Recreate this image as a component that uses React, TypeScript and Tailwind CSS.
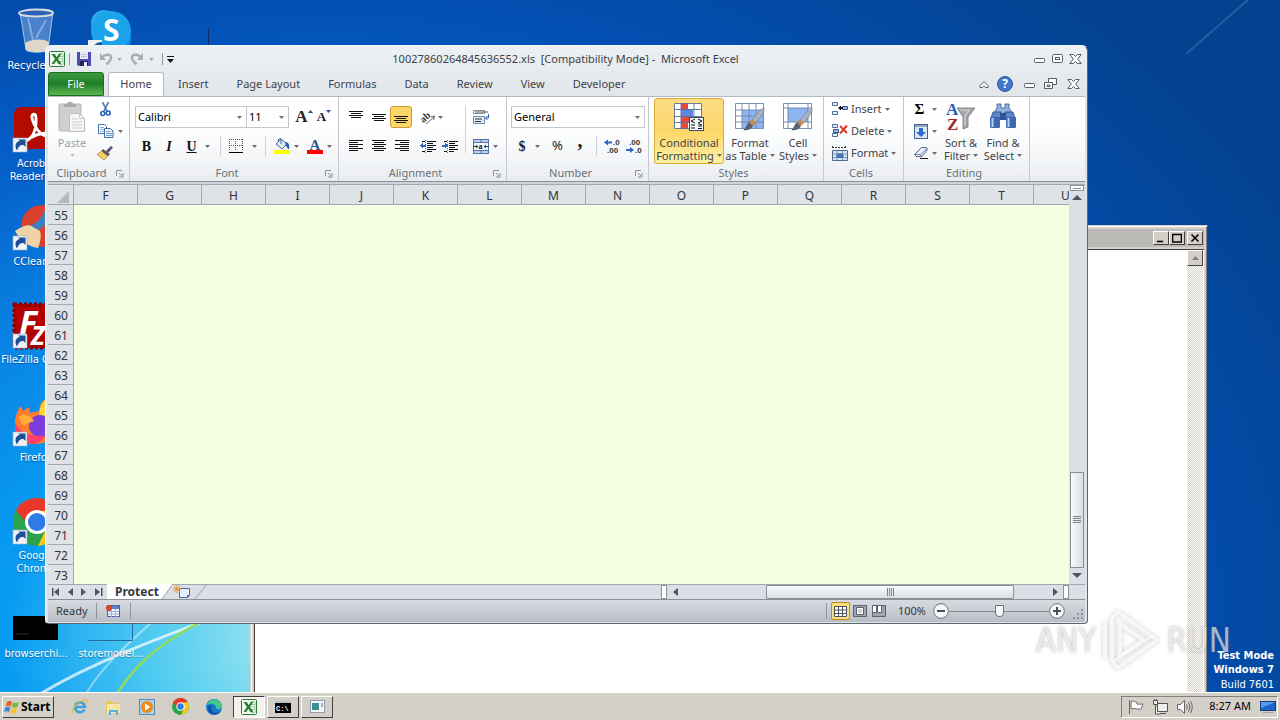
// Windows 7 desktop with an Excel 2010 window in front of a classic window
import type { ReactNode } from "react";

const COLUMNS = ["F", "G", "H", "I", "J", "K", "L", "M", "N", "O", "P", "Q", "R", "S", "T", "U"];
const ROWS = Array.from({ length: 19 }, (_, i) => 55 + i);
const TABS = ["Insert", "Page Layout", "Formulas", "Data", "Review", "View", "Developer"];

/* ---------- small shared pieces ---------- */

function Caret({ className = "text-[#6b6f75]" }: { className?: string }) {
  return (
    <svg width="5" height="3" viewBox="0 0 5 3" className={`shrink-0 ${className}`}>
      <path d="M0 0h5L2.5 3z" fill="currentColor" />
    </svg>
  );
}

function Sep({ className = "h-5", dark }: { className?: string; dark?: boolean }) {
  return <span className={`w-px shrink-0 ${dark ? "bg-[#8f959e]" : "bg-[#cfd3d9]"} ${className}`} />;
}

function Tool({ label, className, children }: { label: string; className: string; children: ReactNode }) {
  return (
    <button aria-label={label} className={`flex h-[22px] shrink-0 items-center justify-center gap-1 ${className}`}>
      {children}
    </button>
  );
}

function Group({
  label,
  className,
  launcher,
  children,
}: {
  label: string;
  className: string;
  launcher?: boolean;
  children: ReactNode;
}) {
  return (
    <section className={`flex shrink-0 flex-col border-r border-[#c3c8cf] ${className}`}>
      <div className="flex h-[68px]">{children}</div>
      <div className="flex h-4 items-center pr-[5px] text-[#6a7078]">
        <span className="flex-1 text-center">{label}</span>
        {launcher && (
          <button aria-label={`${label} settings`}>
            <svg width="9" height="9" viewBox="0 0 9 9" fill="none" stroke="#8b9097">
              <path d="M1.500 7V1.500H7M4 4l3 3M8 4v4H4" />
            </svg>
          </button>
        )}
      </div>
    </section>
  );
}

function Combo({ label, value, className }: { label: string; value: string; className: string }) {
  return (
    <div className={`flex h-[22px] items-center border border-[#c3c7cd] bg-white pr-1 ${className}`}>
      <select aria-label={label} className="min-w-0 flex-1 appearance-none bg-transparent pl-[2px] text-black outline-none">
        <option>{value}</option>
      </select>
      <Caret />
    </div>
  );
}

/* ---------- icons ---------- */

function ExcelIcon() {
  return (
    <svg width="16" height="16" viewBox="0 0 16 16">
      <rect x=".5" y=".5" width="15" height="15" rx="1" fill="#f4faf2" stroke="#2b7a33" />
      <path d="M10 2.500h4v11h-4" fill="#fff" stroke="#9cc79b" />
      <path d="M10 5.500h4M10 8h4M10 10.500h4" stroke="#9cc79b" />
      <path d="M2.500 3h3.200l2 3.300L9.600 3h2.800L9 8l3.600 5H9.400L7.300 9.800 5.300 13H2.500L6 8z" fill="#23802d" />
    </svg>
  );
}

function SaveIcon() {
  return (
    <svg width="14" height="14" viewBox="0 0 14 14">
      <path d="M0 0h14v14H1.500L0 12.500z" fill="#4f4db5" />
      <rect x="3" y="0" width="8" height="7" fill="#e8ecfa" />
      <path d="M4 2.500h6M4 4.500h6" stroke="#b9c0e0" />
      <rect x="3" y="9" width="8" height="5" fill="#27235e" />
      <rect x="7" y="10" width="3" height="4" fill="#e8ecfa" />
    </svg>
  );
}

function UndoIcon({ flip }: { flip?: boolean }) {
  return (
    <svg width="14" height="14" viewBox="0 0 14 14" className={flip ? "-scale-x-100" : ""}>
      <path d="M3 5.500c2-3 8-4 9-.5 1 3-2 4.500-4.500 7.500" fill="none" stroke="#a9adb3" strokeWidth="2.400" />
      <path d="M1 1v7h6z" fill="#a9adb3" />
    </svg>
  );
}

function PasteIcon() {
  return (
    <svg width="28" height="32" viewBox="0 0 28 32">
      <rect x="1" y="3" width="22" height="27" rx="1" fill="#cfcfcf" stroke="#b5b5b5" />
      <path d="M6 6V3h3c0-3 6-3 6 0h3v3z" fill="#aaa" />
      <path d="M11.500 12.500h10l5 5v13h-15z" fill="#f6f6f6" stroke="#bdbdbd" />
      <path d="M21.500 12.500v5h5M14 18h6M14 21h10M14 24h10M14 27h10" fill="none" stroke="#ccc" />
    </svg>
  );
}

function CutIcon() {
  return (
    <svg width="11" height="15" viewBox="0 0 11 15" fill="none">
      <path d="M2.500 0l4.500 9M8.500 0L4 9" stroke="#5e7fae" strokeWidth="1.700" />
      <circle cx="2.800" cy="11.500" r="2" stroke="#2b5fb3" strokeWidth="1.600" />
      <circle cx="8.200" cy="11" r="2" stroke="#2b5fb3" strokeWidth="1.600" />
    </svg>
  );
}

function CopyIcon() {
  return (
    <svg width="16" height="14" viewBox="0 0 16 14" stroke="#3f6fae">
      <path d="M.5.5h6l2 2v7h-8z" fill="#fff" />
      <path d="M2 3.500h4M2 5.500h5M2 7.500h5" stroke="#8aaede" />
      <path d="M6.500 4.500h6l2.500 2.500v6.500H6.500z" fill="#e9f1fc" />
      <path d="M8 7.500h4M8 9.500h6M8 11.500h6" stroke="#6f9bd8" />
    </svg>
  );
}

function PainterIcon() {
  return (
    <svg width="16" height="14" viewBox="0 0 16 14">
      <path d="M14 0l2 1.500L11 7 9 5z" fill="#5b4b7a" />
      <path d="M6 3l7 5-2 2.500-7-5z" fill="#5a5550" />
      <path d="M4.500 5l6 5L7 14 0 8.500z" fill="#efcf6a" stroke="#b18d33" strokeWidth=".8" />
    </svg>
  );
}

function BorderIcon() {
  return (
    <svg width="14" height="14" viewBox="0 0 14 14" fill="none" stroke="#555">
      <path d="M.5 0v12M6.500 0v12M13.500 0v12M0 .5h14M0 6.500h14" strokeDasharray="1 1" />
      <path d="M0 13.500h14" stroke="#000" />
    </svg>
  );
}

function BucketIcon() {
  return (
    <svg width="16" height="16" viewBox="0 0 16 16">
      <path d="M7 1l6 5-5 5-6-5z" fill="#dbe7f6" stroke="#46648f" />
      <path d="M7 6V1.500C7 0 4.500 0 4.500 2v2" fill="none" stroke="#46648f" />
      <path d="M11.500 4c3 0 4.500 3 3.500 7.500-2-1-2-3-3.500-4z" fill="#2c5fb0" />
      <rect y="12" width="16" height="4" fill="#ffff00" />
    </svg>
  );
}

function Lines({ widths, y = 0, align = "start" }: { widths: number[]; y?: number; align?: "start" | "center" | "end" }) {
  return (
    <svg width="14" height="14" viewBox="0 0 14 14" fill="#111" shapeRendering="crispEdges">
      {widths.map((w, i) => {
        const x = align === "start" ? 0 : align === "end" ? 14 - w : Math.floor((14 - w) / 2);
        return <rect key={i} x={x} y={y + i * 2 + 1} width={w} height="1" />;
      })}
    </svg>
  );
}

function IndentIcon({ right }: { right?: boolean }) {
  return (
    <svg width="16" height="13" viewBox="0 0 16 13" shapeRendering="crispEdges">
      <path d="M2 1.500h3M7 1.500h9M7 3.500h6M7 5.500h9M7 7.500h6M7 9.500h9M2 11.500h3M7 11.500h5" stroke="#111" />
      <path d="M5.500 0v13" stroke="#666" strokeDasharray="1 1" />
      <path d={right ? "M6 5.500L3 3v2H0v2h3v2z" : "M0 5.500L3 3v2h3v2H3v2z"} fill="#2c62c0" />
    </svg>
  );
}

function OrientIcon() {
  return (
    <svg width="16" height="15" viewBox="0 0 16 15">
      <text x="1" y="11" fontSize="10" fontWeight="bold" fontFamily="Liberation Serif, serif" fill="#333" transform="rotate(-42 5 9)">
        ab
      </text>
      <path d="M6 14l8-7M14.500 6l-4 .8M14.500 6l-.8 4" stroke="#667" fill="none" />
    </svg>
  );
}

function WrapIcon() {
  return (
    <svg width="17" height="16" viewBox="0 0 17 16" fill="none">
      <path d="M.5 1.500h11v3H.5z" fill="#fff" stroke="#8a8f96" />
      <path d="M2 3h13" stroke="#555" />
      <path d="M.5 7.500h11v7H.5z" fill="#e3edfa" stroke="#6d86aa" />
      <path d="M2 10h7M2 12.500h6" stroke="#333" />
      <path d="M15.500 5v4h-3M14.500 7l-2 2 2 2" stroke="#2c62c0" />
    </svg>
  );
}

function MergeIcon() {
  return (
    <svg width="16" height="15" viewBox="0 0 16 15">
      <rect x=".5" y=".5" width="15" height="14" fill="#b9d0ee" stroke="#54749f" />
      <path d="M0 3.500h16M0 11.500h16M8 0v3M8 12v3" stroke="#54749f" />
      <rect x="1" y="4" width="14" height="7" fill="#f4f8fd" />
      <path d="M0 7.500h5M11 7.500h5" stroke="#1f3f73" />
      <path d="M5 7.500L3 5.500v4zM11 7.500l2-2v4z" fill="#1f3f73" />
      <text x="5.500" y="10" fontSize="8" fontWeight="bold" fontFamily="Liberation Serif, serif" fill="#111">a</text>
    </svg>
  );
}

function DecimalIcon({ less }: { less?: boolean }) {
  return (
    <svg width="17" height="15" viewBox="0 0 17 15" fontSize="8" fontWeight="bold" fontFamily="Liberation Sans, sans-serif">
      <text x={less ? 3 : 9} y="6" fill="#333">{less ? ".00" : ".0"}</text>
      <text x={less ? 9 : 3} y="14" fill="#333">{less ? ".0" : ".00"}</text>
      <path d={less ? "M0 10h4V8l4 3-4 3v-2H0z" : "M8 2.500H4V.5L0 3.500l4 3v-2h4z"} fill="#2c62c0" />
    </svg>
  );
}

function Brush() {
  return (
    <g>
      <path d="M30 6c1 4-5 12-9 15l-3-3C22 13 27 7 30 6z" fill="#a8b1bf" stroke="#6e7a8c" strokeWidth=".6" />
      <path d="M18 17l4 4-3 3-4-4z" fill="#c68b4a" />
      <path d="M15 20l4 4c-2 4-6 5-10 4 3-1 3-6 6-8z" fill="#5d6470" />
    </g>
  );
}

function CondFormatIcon() {
  return (
    <svg width="32" height="30" viewBox="0 0 32 30">
      <rect x="1.500" y="1.500" width="27" height="25" fill="#fff" />
      <path d="M8 1h7v6H8zM8 14h10v6H8zM8 20h7v7H8z" fill="#e8483a" />
      <path d="M8 7h12v7H8z" fill="#5d86e0" />
      <path d="M1.500 1.500h27v25h-27zM1 7.500h27M1 14.500h27M1 20.500h27M8 1v26M21 1v26" fill="none" stroke="#5b6f99" strokeWidth=".9" />
      <rect x="16.500" y="15.500" width="14" height="13" fill="#f4f7fb" stroke="#3d4a5f" />
      <path d="M22 17l-4 2 4 2M18 23h4M18 26h4M25 17l4 2-4 2M25 21.500l4 1.500M25 24h4M25 26.500h4" fill="none" stroke="#111" />
    </svg>
  );
}

function TableIcon() {
  return (
    <svg width="32" height="30" viewBox="0 0 32 30">
      <rect x="1.500" y="1.500" width="28" height="25" fill="#fff" />
      <path d="M8 8h22v18H8z" fill="#8fb4f2" />
      <path d="M1.500 1.500h28v25h-28zM1 8h28M1 14h28M1 20h28M8 1v26M15 1v26M22 1v26" fill="none" stroke="#6f83ad" strokeWidth=".9" />
      <Brush />
    </svg>
  );
}

function CellStyleIcon() {
  return (
    <svg width="32" height="30" viewBox="0 0 32 30">
      <rect x="1.500" y="1.500" width="28" height="25" fill="#fff" />
      <path d="M6 6h20v14H6z" fill="#8fb4f2" />
      <path d="M1.500 1.500h28v25h-28zM1 6h28M1 20h28M6 1v26M26 1v26" fill="none" stroke="#6f83ad" strokeWidth=".9" />
      <Brush />
    </svg>
  );
}

function CellsIcon({ kind }: { kind: "insert" | "delete" | "format" }) {
  if (kind === "format") {
    return (
      <svg width="16" height="15" viewBox="0 0 16 15" fill="none" stroke="#4f6c96">
        <path d="M0 1.500h14M.5 0v3M13.500 0v3" stroke="#333" strokeDasharray="2 1" />
        <path d="M.5 4.500h15v10H.5z" fill="#d4e2f5" />
        <path d="M0 8h16M0 11.500h16M5 4v11M10.500 4v11" strokeOpacity=".6" />
        <path d="M5 8h6v3.500H5z" fill="#4679c9" />
      </svg>
    );
  }
  return (
    <svg width="16" height="14" viewBox="0 0 16 14" fill="none">
      <path d="M.5.5h5v3h-5zM.5 9.500h5v3h-5z" fill="#e7effa" stroke="#4f6c96" />
      {kind === "insert" ? (
        <>
          <path d="M10.500 4.500h5v3h-5z" fill="#9ab8e6" stroke="#35558a" />
          <path d="M6 6l3-2.500V5h2v2H9v1.500z" fill="#111" />
        </>
      ) : (
        <>
          <path d="M1.500 5.500h5v3h-5z" fill="#9ab8e6" stroke="#35558a" />
          <path d="M8 2l7 7M15 1.500L8 9.500" stroke="#d93a2b" strokeWidth="2" />
        </>
      )}
    </svg>
  );
}

function SortIcon() {
  return (
    <svg width="32" height="30" viewBox="0 0 32 30" fontFamily="Liberation Serif, serif" fontWeight="bold">
      <path d="M12 6h18l-7 9v10l-5 2V15z" fill="#a3a6aa" stroke="#75787c" strokeWidth=".8" />
      <path d="M15 8h9l-4 6v9" fill="none" stroke="#c9cbcd" strokeWidth="1.500" />
      <text x="1" y="13" fontSize="17" fill="#2b5bb5">A</text>
      <text x="2" y="28" fontSize="17" fill="#a32626">Z</text>
    </svg>
  );
}

function FindIcon() {
  return (
    <svg width="28" height="28" viewBox="0 0 28 28">
      <path d="M8 2h4v4h4V2h4v4l2 3v4H6V9l2-3z" fill="#93b2e0" stroke="#35568f" strokeWidth=".8" />
      <path d="M4 10h8l1 6H2zM16 10h8l2 6H15z" fill="#5b86c9" stroke="#2d4b82" strokeWidth=".8" />
      <rect x="1" y="15" width="10" height="11" rx="1" fill="#3d69b3" />
      <rect x="17" y="15" width="10" height="11" rx="1" fill="#3d69b3" />
      <path d="M3.500 16v9M19.500 16v9" stroke="#b7cff0" strokeWidth="2" />
      <rect x="11" y="11" width="6" height="7" fill="#2f5596" />
    </svg>
  );
}

function FillDownIcon() {
  return (
    <svg width="14" height="15" viewBox="0 0 14 15">
      <rect x=".5" y=".5" width="13" height="14" fill="#dce8f8" stroke="#44618f" />
      <path d="M1 2h12" stroke="#44618f" />
      <path d="M5 4h4v4h3l-5 5-5-5h3z" fill="#2f6ad0" />
    </svg>
  );
}

function EraserIcon() {
  return (
    <svg width="14" height="12" viewBox="0 0 14 12">
      <path d="M7.500.5h5l1 2-5.500 7H2L.5 7.500z" fill="#e6edf8" stroke="#53698f" />
      <path d="M.5 7.500h6L13 1.500M6.500 7.500l1 2" fill="none" stroke="#53698f" strokeWidth=".8" />
      <path d="M6 11.500h8" stroke="#111" />
    </svg>
  );
}

type Glyph = "min" | "max" | "restore" | "close";

function WindowGlyph({ kind }: { kind: Glyph }) {
  return (
    <svg width="13" height="12" viewBox="0 0 13 12" fill="#fff" stroke="#565c66">
      {kind === "min" && <rect x="1.500" y="5.500" width="10" height="4" rx="1" />}
      {kind === "max" && (
        <>
          <rect x="1.500" y="1.500" width="10" height="8" rx="1" />
          <rect x="4.500" y="4.500" width="4" height="2" />
        </>
      )}
      {kind === "restore" && (
        <>
          <path d="M4.500.5h8v6h-8z" />
          <path d="M.5 4.500h8v6h-8z" />
          <path d="M3 7h3v1.500H3z" />
        </>
      )}
      {kind === "close" && <path d="M.8 1.500h3.700l2 2 2-2h3.700L8.700 6l3.500 4.500H8.500l-2-2-2 2H.8L4.300 6z" />}
    </svg>
  );
}

function Arrow({ dir, bar }: { dir: "left" | "right" | "up" | "down"; bar?: boolean }) {
  const d = { left: "M7 1v8L2 5z", right: "M2 1v8l5-4z", up: "M0 7h10L5 2z", down: "M0 2h10L5 7z" }[dir];
  return (
    <svg width="10" height="10" viewBox="0 0 10 10" fill="#4b5563">
      <path d={d} />
      {bar && <path d={dir === "left" ? "M0 1h1.500v8H0z" : "M8 1h1.500v8H8z"} />}
    </svg>
  );
}

/* ---------- desktop icons ---------- */

function Shortcut() {
  return (
    <g>
      <rect x="1" y="32" width="14" height="14" fill="#eef2f7" stroke="#9db0c6" strokeWidth=".6" />
      <path d="M5 44.500c-3-5-1-9 3-9.500L6 33.500h7.500V41l-2-2c-4 0-5 2-6.500 5.500z" fill="#1c4f93" />
    </g>
  );
}

function RecycleArt() {
  return (
    <g>
      <path d="M8 4l6 38c4 3 18 3 22 0l5-38z" fill="#8fb6e6" fillOpacity=".5" stroke="#d7e6f6" strokeOpacity=".7" />
      <path d="M13 35c6-4 18-5 24-1l-1 8c-4 3-18 3-22 0z" fill="#ded6c8" />
      <path d="M16 10l5 22M34 12l-10 18" fill="none" stroke="#dceafa" strokeOpacity=".4" strokeWidth="2" />
      <ellipse cx="24" cy="5" rx="17" ry="3.500" fill="#2c62b5" stroke="#d9dde2" strokeWidth="1.800" />
    </g>
  );
}

function SkypeArt() {
  return (
    <g>
      <circle cx="17" cy="15" r="13" fill="#2ba9e8" />
      <circle cx="30" cy="31" r="14" fill="#0f8de0" />
      <circle cx="24" cy="23" r="20" fill="#1ba4ea" />
      <text x="16" y="33" fontSize="30" fontWeight="bold" fontFamily="Open Sans, sans-serif" fill="#fff">S</text>
      <rect x="1" y="32" width="14" height="14" fill="#eef2f7" />
      <path d="M5 41c1-5 4-5 5-5l-1-1 6-1v6l-2-2c-4 0-5 2-5 4z" fill="#1c4f93" />
    </g>
  );
}

function AcrobatArt() {
  return (
    <g>
      <rect x="2" y="1" width="45" height="42" rx="7" fill="#b30b00" />
      <path d="M14 35c6-2 11-11 10-23 0-5-5-5-4 0 2 9 8 17 16 19 6 1 6-4 0-4-8 0-16 3-22 8-4 3-4 2 0 0z" fill="none" stroke="#fff" strokeWidth="2.800" />
      <Shortcut />
    </g>
  );
}

function CCleanerArt() {
  return (
    <g>
      <circle cx="30" cy="22" r="21" fill="#d9402d" />
      <path d="M35 2l4 1-6 18-8 6-8-5c6-2 12-5 18-20z" fill="#3a81c4" />
      <path d="M3 27c6-4 12-7 16-5l9 5c2 6-1 15-2 17-8-1-17-6-23-17z" fill="#f0d3a4" />
      <Shortcut />
    </g>
  );
}

function FileZillaArt() {
  return (
    <g>
      <rect x="2" y="2" width="45" height="44" fill="#b20000" stroke="#8a0000" strokeWidth="3" strokeDasharray="3 2" />
      <text x="7" y="33" fontSize="34" fontWeight="bold" fontStyle="italic" fontFamily="Open Sans, sans-serif" fill="#fff">F</text>
      <text x="19" y="43" fontSize="26" fontWeight="bold" fontStyle="italic" fontFamily="Open Sans, sans-serif" fill="#fff">Z</text>
      <Shortcut />
    </g>
  );
}

function FirefoxArt() {
  return (
    <g>
      <path d="M22 44C6 44-1 28 5 13c0 0 1-4 4-7l2 5 6-4 1 6c4-1 6-2 9-2 0-5 2-9 6-12 3 6 13 14 13 26 0 12-10 19-24 19z" fill="#ff7a2f" />
      <path d="M33 0c3 6 13 14 13 26l-18-8c-2-7 1-14 5-18z" fill="#ffd83d" />
      <circle cx="28" cy="26" r="11" fill="#7b3fe0" />
      <path d="M3 22c6 14 18 14 30 14-4 7-11 9-18 7C8 40 2 32 3 22z" fill="#ff3f6a" />
      <path d="M7 16c7-3 12 0 15 5-4 2-7 1-9 5-4-2-6-6-6-10z" fill="#ffac38" />
      <Shortcut />
    </g>
  );
}

function ChromeArt() {
  return (
    <g>
      <circle cx="25" cy="24" r="24" fill="#2aa34c" />
      <path d="M4 12C13-4 37-4 46 12l-21 3-8 13z" fill="#e8382c" />
      <path d="M46 12c7 16-3 35-20 36l9-19-6-16z" fill="#fbc816" />
      <circle cx="25" cy="24" r="12" fill="#fff" />
      <circle cx="25" cy="24" r="9" fill="#2f7be6" />
      <Shortcut />
    </g>
  );
}

function DesktopIcon({ label, className = "col-start-1", children }: { label?: string; className?: string; children: ReactNode }) {
  return (
    <button className={`flex flex-col items-center gap-[3px] pt-2 ${className}`}>
      <svg width="48" height="48" viewBox="0 0 48 48" className="shrink-0">
        {children}
      </svg>
      {label && <span className="w-[72px] text-center leading-[13px] text-white [text-shadow:0_1px_1px_#0036]">{label}</span>}
    </button>
  );
}

function Wallpaper() {
  return (
    <div className="absolute inset-0 bg-[radial-gradient(ellipse_1000px_780px_at_320px_640px,#b5eef0_0%,#55cdf0_16%,#089cf2_31%,#0886e6_48%,#0664cf_65%,#034fb2_82%,#03428f_112%)]">
      <svg className="h-full w-full" fill="none">
        <path d="M40 694C90 664 140 645 260 600" stroke="#fff" strokeOpacity=".7" strokeWidth="3" />
        <path d="M86 694C100 670 120 650 160 615" stroke="#fff" strokeOpacity=".45" strokeWidth="2" />
        <path d="M117 694C135 664 160 644 200 622" stroke="#8fdc5a" strokeWidth="2.500" />
        <path d="M1250 -2L1186 54" stroke="#5f93cf" strokeOpacity=".35" strokeWidth="2" />
        <path d="M208.500 28v18" stroke="#0a2f6c" />
      </svg>
    </div>
  );
}

/* ---------- classic window in the back ---------- */

function ClassicButton({ label, d }: { label: string; d: string }) {
  return (
    <button
      aria-label={label}
      className="flex h-[14px] w-4 items-center justify-center border border-t-white border-r-[#404040] border-b-[#404040] border-l-white bg-[#d4d0c8]"
    >
      <svg width="10" height="10" viewBox="0 0 10 10" fill="none" stroke="#000" strokeWidth="1.600">
        <path d={d} />
      </svg>
    </button>
  );
}

function ClassicWindow() {
  return (
    <div className="absolute top-[225px] right-[72px] bottom-[-12px] left-[250px] flex flex-col border border-t-[#d4d0c8] border-r-[#404040] border-l-[#d4d0c8] bg-[#d4d0c8] p-[3px] shadow-[inset_1px_1px_#fff,inset_-1px_-1px_#808080]">
      <div className="flex h-[18px] shrink-0 items-center justify-end bg-[#bcbab7] pr-px">
        <ClassicButton label="Minimize" d="M1 8.500h6" />
        <ClassicButton label="Maximize" d="M.5 1.500h9v7.500h-9z" />
        <span className="w-[2px]" />
        <ClassicButton label="Close" d="M1.500 1.500l7 7M8.500 1.500l-7 7" />
      </div>
      <div className="mt-[2px] flex flex-1 border-t border-l border-[#404040] bg-white pr-px">
        <div className="flex-1" />
        <div className="w-4 bg-[#ebe9e5] bg-[repeating-conic-gradient(#fff_0_25%,#d4d0c8_0_50%)] bg-[size:2px_2px]">
          <button
            aria-label="Scroll up"
            className="flex h-4 w-4 items-center justify-center border border-t-white border-r-[#404040] border-b-[#404040] border-l-white bg-[#d4d0c8]"
          >
            <svg width="7" height="4" viewBox="0 0 7 4">
              <path d="M0 4h7L3.500 0z" fill="#808080" />
            </svg>
          </button>
        </div>
      </div>
    </div>
  );
}

/* ---------- Excel ---------- */

function TitleBar() {
  return (
    <header className="flex h-[26px] shrink-0 items-center">
      <div className="flex flex-1 items-center pl-px">
        <ExcelIcon />
        <Sep dark className="ml-1 h-3" />
        <button aria-label="Save" className="ml-[7px]"><SaveIcon /></button>
        <button aria-label="Undo" className="ml-2 flex items-center gap-1"><UndoIcon /><Caret className="text-[#a5a9af]" /></button>
        <button aria-label="Redo" className="ml-2 flex items-center gap-[5px]"><UndoIcon flip /><Caret className="text-[#a5a9af]" /></button>
        <Sep dark className="ml-2 h-3" />
        <button aria-label="Customize Quick Access Toolbar" className="ml-1">
          <svg width="7" height="7" viewBox="0 0 7 7"><path d="M0 0h7v1H0zM0 3h7L3.500 7z" fill="#111" /></svg>
        </button>
      </div>
      <h1 className="whitespace-pre text-[#3c4046]">10027860264845636552.xls  [Compatibility Mode] -  Microsoft Excel</h1>
      <div className="flex flex-1 justify-end gap-[5px] pr-[3px]">
        <button aria-label="Minimize"><WindowGlyph kind="min" /></button>
        <button aria-label="Maximize"><WindowGlyph kind="max" /></button>
        <button aria-label="Close"><WindowGlyph kind="close" /></button>
      </div>
    </header>
  );
}

function TabRow() {
  return (
    <nav className="flex h-6 shrink-0 items-stretch text-[#3f444b]">
      <button className="w-14 rounded-t-[3px] border border-[#1c6b22] bg-[linear-gradient(#3e9a3f,#1f7a28_50%,#2c8a31_60%,#5cb54f)] text-white">File</button>
      <button className="-mb-px ml-1 w-14 rounded-t-[3px] border border-b-0 border-[#b5bac2] bg-white pb-[2px]">Home</button>
      {TABS.map((tab) => (
        <button key={tab} className="px-[14px]">{tab}</button>
      ))}
      <div className="flex flex-1 items-center justify-end gap-2 pr-[5px]">
        <button aria-label="Minimize the Ribbon">
          <svg width="10" height="9" viewBox="0 0 10 9" fill="#fff" stroke="#565c66">
            <path d="M1 5.500L5 1.500l4 4V7.500H6.500L5 6 3.500 7.500H1z" />
          </svg>
        </button>
        <button aria-label="Help" className="mr-[2px] flex h-4 w-4 items-center justify-center rounded-full border border-[#2d5a9e] bg-[#3f78cc] text-[12px] font-bold text-white">?</button>
        <button aria-label="Minimize workbook"><WindowGlyph kind="min" /></button>
        <button aria-label="Restore workbook" className="mr-[2px]"><WindowGlyph kind="restore" /></button>
        <button aria-label="Close workbook"><WindowGlyph kind="close" /></button>
      </div>
    </nav>
  );
}

function BigButton({ lines, active, className, children }: { lines: [string, string]; active?: boolean; className: string; children: ReactNode }) {
  return (
    <button
      className={`flex h-[66px] shrink-0 flex-col items-center rounded-[3px] border pt-[3px] leading-[13px] whitespace-nowrap ${
        active ? "border-[#d9ae3c] bg-[linear-gradient(#fbdd83,#fdd668_50%,#fff1a5)]" : "border-transparent"
      } ${className}`}
    >
      <span className="flex h-[34px] items-start">{children}</span>
      <span>{lines[0]}</span>
      <span className="flex items-center gap-[3px]">
        {lines[1]}
        <Caret />
      </span>
    </button>
  );
}

function Ribbon() {
  return (
    <div className="flex h-[86px] shrink-0 overflow-hidden border-t border-b border-t-[#b5bac2] border-b-[#8b9097] bg-[linear-gradient(#fff,#fff_35%,#f3f5f7_75%,#e9ecf0)] text-[#3f444b]">
      <Group label="Clipboard" className="w-[82px]" launcher>
        <button className="flex w-12 flex-col items-center pt-1 text-[#9a9ea4]">
          <PasteIcon />
          <span className="mt-[2px] leading-4">Paste</span>
          <Caret className="mt-[3px] text-[#c0c3c8]" />
        </button>
        <div className="flex flex-col pt-px">
          <Tool label="Cut" className="w-[18px]"><CutIcon /></Tool>
          <Tool label="Copy" className="w-[28px]"><CopyIcon /><Caret /></Tool>
          <Tool label="Format Painter" className="w-[18px]"><PainterIcon /></Tool>
        </div>
      </Group>

      <Group label="Font" className="w-[209px]" launcher>
        <div className="flex flex-1 flex-col gap-[7px] pt-[9px] pl-[5px]">
          <div className="flex">
            <Combo label="Font" value="Calibri" className="w-[112px]" />
            <Combo label="Font size" value="11" className="-ml-px w-[43px]" />
            <Tool label="Grow font" className="ml-[5px] w-5">
              <span className="flex items-center font-['Liberation_Serif',serif] text-[17px] font-bold text-[#222]">A<Caret className="-mt-3 rotate-180 text-[#2b4f8c]" /></span>
            </Tool>
            <Tool label="Shrink font" className="w-5">
              <span className="flex items-center font-['Liberation_Serif',serif] text-[13px] font-bold text-[#222]">A<Caret className="-mt-3 text-[#2b4f8c]" /></span>
            </Tool>
          </div>
          <div className="flex items-center">
            <Tool label="Bold" className="w-[23px] font-['Liberation_Serif',serif] text-[14px] font-bold text-[#111]">B</Tool>
            <Tool label="Italic" className="w-[22px] font-['Liberation_Serif',serif] text-[14px] font-bold text-[#111] italic">I</Tool>
            <Tool label="Underline" className="w-[36px] font-['Liberation_Serif',serif] text-[14px] font-bold text-[#111]"><u>U</u><Caret className="ml-1 text-[#6b6f75]" /></Tool>
            <Sep className="mx-1 h-5" />
            <Tool label="Borders" className="w-[36px]"><BorderIcon /><span className="w-px" /><Caret /></Tool>
            <Sep className="mx-1 h-5" />
            <Tool label="Fill colour" className="w-[32px]"><BucketIcon /><Caret /></Tool>
            <Tool label="Font colour" className="w-[34px]">
              <svg width="16" height="16" viewBox="0 0 16 16">
                <text x="2.500" y="11.500" fontSize="15" fontWeight="bold" fontFamily="Liberation Serif, serif" fill="#2f5792">A</text>
                <rect y="12" width="16" height="4" fill="#f00" />
              </svg>
              <Caret />
            </Tool>
          </div>
        </div>
      </Group>

      <Group label="Alignment" className="w-[168px]" launcher>
        <div className="flex w-[121px] flex-col gap-[7px] pt-[9px] pl-[5px]">
          <div className="flex">
            <Tool label="Top align" className="w-[23px]"><Lines widths={[14, 10, 14, 10]} align="center" /></Tool>
            <Tool label="Middle align" className="w-[23px]"><Lines widths={[14, 10, 14, 10]} y={3} align="center" /></Tool>
            <Tool label="Bottom align" className="w-[22px] rounded-[3px] border border-[#c99a2e] bg-[#fdd668]"><Lines widths={[14, 10, 14, 10]} y={5} align="center" /></Tool>
            <Tool label="Orientation" className="ml-[5px] w-[28px] gap-[2px]"><OrientIcon /><Caret /></Tool>
          </div>
          <div className="flex">
            <Tool label="Align left" className="w-[23px]"><Lines widths={[14, 9, 14, 9, 14, 9]} /></Tool>
            <Tool label="Center" className="w-[23px]"><Lines widths={[14, 10, 14, 10, 14, 10]} align="center" /></Tool>
            <Tool label="Align right" className="w-[23px]"><Lines widths={[14, 9, 14, 9, 14, 9]} align="end" /></Tool>
            <Tool label="Decrease indent" className="ml-1 w-[22px]"><IndentIcon /></Tool>
            <Tool label="Increase indent" className="w-[22px]"><IndentIcon right /></Tool>
          </div>
        </div>
        <Sep className="mt-2 ml-[5px] h-12" />
        <div className="flex flex-col gap-[7px] pt-[9px] pl-[6px]">
          <Tool label="Wrap text" className="w-[18px]"><WrapIcon /></Tool>
          <Tool label="Merge and center" className="w-[26px]"><MergeIcon /><Caret /></Tool>
        </div>
      </Group>

      <Group label="Number" className="w-[142px]" launcher>
        <div className="flex flex-1 flex-col gap-[7px] px-1 pt-[9px]">
          <Combo label="Number format" value="General" className="w-full" />
          <div className="flex items-center">
            <Tool label="Accounting format" className="w-[36px] gap-[9px] font-['Liberation_Serif',serif] text-[14px] font-bold text-[#222]">$<Caret /></Tool>
            <Tool label="Percent style" className="w-[21px] text-[13px] text-[#222]">%</Tool>
            <Tool label="Comma style" className="w-[24px] font-['Liberation_Serif',serif] text-[20px] font-bold text-[#222]"><span className="-mt-3">,</span></Tool>
            <Sep className="mx-1 h-5" />
            <Tool label="Increase decimal" className="w-[22px]"><DecimalIcon /></Tool>
            <Tool label="Decrease decimal" className="w-[22px]"><DecimalIcon less /></Tool>
          </div>
        </div>
      </Group>

      <Group label="Styles" className="w-[175px]">
        <BigButton lines={["Conditional", "Formatting"]} active className="mt-px ml-[5px] w-[70px]"><CondFormatIcon /></BigButton>
        <BigButton lines={["Format", "as Table"]} className="mt-px w-[52px]"><TableIcon /></BigButton>
        <BigButton lines={["Cell", "Styles"]} className="mt-px w-[44px]"><CellStyleIcon /></BigButton>
      </Group>

      <Group label="Cells" className="w-[80px]">
        <div className="flex flex-col pt-px pl-2">
          <button className="flex h-[22px] items-center gap-[3px]"><CellsIcon kind="insert" />Insert<Caret /></button>
          <button className="flex h-[22px] items-center gap-[3px]"><CellsIcon kind="delete" />Delete<Caret /></button>
          <button className="flex h-[22px] items-center gap-[3px]"><CellsIcon kind="format" />Format<Caret /></button>
        </div>
      </Group>

      <Group label="Editing" className="w-[126px]">
        <div className="flex w-[36px] flex-col items-end pt-px">
          <Tool label="Sum" className="w-[28px] gap-2 font-['Liberation_Serif',serif] text-[15px] font-bold text-black">Σ<Caret /></Tool>
          <Tool label="Fill" className="w-[30px]"><FillDownIcon /><Caret /></Tool>
          <Tool label="Clear" className="w-[30px]"><EraserIcon /><Caret /></Tool>
        </div>
        <BigButton lines={["Sort &", "Filter"]} className="mt-px w-[42px]"><SortIcon /></BigButton>
        <BigButton lines={["Find &", "Select"]} className="mt-px w-[42px]"><FindIcon /></BigButton>
      </Group>
    </div>
  );
}

function Sheet() {
  return (
    <div className="flex min-h-0 flex-1 border-t border-[#a3a8b0]">
      <div className="min-w-0 flex-1 overflow-hidden bg-[#f5ffdf]">
        <table className="w-[1050px] table-fixed border-separate border-spacing-0 text-[12px] text-[#30343a]">
          <thead>
            <tr className="h-5 bg-[#dfe2e7]">
              <th className="w-[26px] border-r border-b border-[#a3a8b0] p-0">
                <svg width="12" height="12" viewBox="0 0 12 12" className="mt-1 mr-1 ml-auto">
                  <path d="M12 0v12H0z" fill="#b4b9c1" />
                </svg>
              </th>
              {COLUMNS.map((c) => (
                <th key={c} className="w-16 border-r border-b border-[#a3a8b0] p-0 pt-[2px] leading-4 font-normal">{c}</th>
              ))}
            </tr>
          </thead>
          <tbody>
            {ROWS.map((r) => (
              <tr key={r} className="h-5">
                <th className="border-r border-b border-[#a3a8b0] bg-[#dfe2e7] p-0 pt-[2px] pl-px leading-4 font-normal">{r}</th>
                <td colSpan={COLUMNS.length} className="p-0" />
              </tr>
            ))}
          </tbody>
        </table>
      </div>
      <div className="flex w-4 flex-col items-center bg-[#dcdfe5]">
        <span className="flex h-[6px] w-[14px] shrink-0 items-center justify-center border border-[#8b9097] bg-white"><i className="h-px w-2 bg-[#8b9097]" /></span>
        <button aria-label="Scroll up" className="flex h-[14px] shrink-0 items-center"><Arrow dir="up" /></button>
        <div className="w-full grow-[268] basis-0" />
        <div className="flex w-[14px] grow-[95] basis-0 flex-col items-center justify-center gap-px border border-[#8b9097] bg-[linear-gradient(90deg,#fafbfc,#d9dde3)]">
          {[0, 1, 2, 3].map((i) => (
            <i key={i} className="h-px w-2 bg-[#7c828b]" />
          ))}
        </div>
        <button aria-label="Scroll down" className="flex h-4 shrink-0 items-center"><Arrow dir="down" /></button>
      </div>
    </div>
  );
}

function SheetBar() {
  return (
    <div className="flex h-4 shrink-0 items-stretch border-t border-b border-[#a3a8b0] border-b-[#8b9097] bg-[#dcdfe5]">
      <div className="flex w-[59px] items-center justify-around px-[2px]">
        <button aria-label="First sheet"><Arrow dir="left" bar /></button>
        <button aria-label="Previous sheet"><Arrow dir="left" /></button>
        <button aria-label="Next sheet"><Arrow dir="right" /></button>
        <button aria-label="Last sheet"><Arrow dir="right" bar /></button>
      </div>
      <button className="-mt-px flex items-center bg-white pt-px pl-2 text-[12px] font-bold text-[#33373d]">Protect</button>
      <svg width="50" height="15" viewBox="0 0 50 15" className="-mt-px" fill="none">
        <path d="M0 0h14L3 15H0z" fill="#fff" />
        <path d="M14 0L3 15M48 0L36 15" stroke="#9aa0a9" />
        <path d="M20.500 4.500h10v7l-2 2h-8z" fill="#e6eefb" stroke="#5067a8" />
        <path d="M28.500 13.500v-2h2" stroke="#5067a8" />
        <path d="M18 1v8M14 5h8M15 2l6 6M21 2l-6 6" stroke="#e0952c" />
      </svg>
      <div className="flex-1" />
      <span className="w-[6px] border border-[#8b9097] bg-white" />
      <button aria-label="Scroll left" className="ml-1 flex items-center"><Arrow dir="left" /></button>
      <div className="flex w-[370px] pl-[85px]">
        <div className="flex w-[248px] items-center justify-center gap-px rounded-[1px] border border-[#8b9097] bg-[linear-gradient(#fafbfc,#d9dde3)]">
          {[0, 1, 2, 3].map((i) => (
            <i key={i} className="h-2 w-px bg-[#7c828b]" />
          ))}
        </div>
      </div>
      <button aria-label="Scroll right" className="flex items-center"><Arrow dir="right" /></button>
      <span className="mr-4 ml-[2px] w-[6px] border border-[#8b9097] bg-white" />
    </div>
  );
}

function StatusBar() {
  return (
    <footer className="flex h-[22px] shrink-0 items-center bg-[linear-gradient(#d8dce2,#c9cdd4_50%,#b9bec6)] text-[#33373d]">
      <span className="w-12 pl-2">Ready</span>
      <Sep dark className="h-4" />
      <button aria-label="Record macro" className="ml-2">
        <svg width="16" height="14" viewBox="0 0 16 14">
          <rect x="2.500" y="1.500" width="12" height="11" fill="#f4f8ff" stroke="#4864a8" />
          <path d="M3 2h11v3H3z" fill="#5c80cf" />
          <path d="M3 7.500h11M3 10h11M6.500 5v8M10.500 5v8" stroke="#9fb2dc" />
          <circle cx="4" cy="4" r="3" fill="#d2452f" />
        </svg>
      </button>
      <Sep dark className="ml-[9px] h-4" />
      <div className="flex-1" />
      <Sep dark className="h-4" />
      <button aria-label="Normal view" className="ml-1 flex h-[18px] w-[19px] items-center justify-center rounded-[2px] border border-[#c28a1d] bg-[#fde07e]">
        <svg width="13" height="11" viewBox="0 0 13 11" fill="#fff" stroke="#4c525b"><path d="M.5.5h12v10H.5zM.5 4h12M.5 7.500h12M4.500.5v10M8.500.5v10" /></svg>
      </button>
      <button aria-label="Page layout view" className="ml-[3px]">
        <svg width="14" height="12" viewBox="0 0 14 12" stroke="#5d636c"><path d="M.5.5h13v11H.5z" fill="#9ea4ad" /><path d="M3.500 2.500h7v7h-7z" fill="#fff" /><path d="M5 5h4M5 7h4" stroke="#9ea4ad" /></svg>
      </button>
      <button aria-label="Page break view" className="ml-[5px]">
        <svg width="14" height="12" viewBox="0 0 14 12" stroke="#5d636c"><path d="M.5.5h13v11H.5z" fill="#9ea4ad" /><path d="M.5.5h4v7h-4zM5.500.5h4v7h-4z" fill="#fff" /></svg>
      </button>
      <button className="w-[40px] text-right">100%</button>
      <button aria-label="Zoom out" className="ml-[7px]">
        <svg width="16" height="16" viewBox="0 0 16 16"><circle cx="8" cy="8" r="7.300" fill="#f7f8fa" stroke="#6c727b" /><path d="M4 8h8" stroke="#4a4f57" strokeWidth="2" /></svg>
      </button>
      <input
        type="range"
        aria-label="Zoom"
        defaultValue={50}
        className="h-4 w-[100px] appearance-none bg-[linear-gradient(#858b94,#858b94)] bg-[size:100%_1px] bg-center bg-no-repeat [&::-webkit-slider-thumb]:h-3 [&::-webkit-slider-thumb]:w-[9px] [&::-webkit-slider-thumb]:appearance-none [&::-webkit-slider-thumb]:rounded-b-[4px] [&::-webkit-slider-thumb]:border [&::-webkit-slider-thumb]:border-[#6c727b] [&::-webkit-slider-thumb]:bg-[#f7f8fa]"
      />
      <button aria-label="Zoom in">
        <svg width="16" height="16" viewBox="0 0 16 16"><circle cx="8" cy="8" r="7.300" fill="#f7f8fa" stroke="#6c727b" /><path d="M4 8h8M8 4v8" stroke="#4a4f57" strokeWidth="2" /></svg>
      </button>
      <svg width="12" height="12" viewBox="0 0 12 12" className="mt-2 mr-px ml-[7px]" fill="#8f959e">
        <path d="M9 0h2v2H9zM9 4h2v2H9zM9 8h2v2H9zM5 4h2v2H5zM5 8h2v2H5zM1 8h2v2H1z" />
      </svg>
    </footer>
  );
}

function ExcelWindow() {
  return (
    <div className="absolute top-[45px] right-[192px] bottom-[68px] left-[45px] flex flex-col rounded-[6px] rounded-b-[4px] border border-[#f4f6f8] border-r-[#5d6570] border-b-[#5d6570] bg-[linear-gradient(#eef1f3,#dfe3e7_60px)] px-[2px] pb-px">
      <TitleBar />
      <TabRow />
      <Ribbon />
      <div className="h-[2px] shrink-0 bg-[#d0d4da]" />
      <Sheet />
      <SheetBar />
      <StatusBar />
    </div>
  );
}

/* ---------- taskbar ---------- */

function TaskButton({ label, pressed, children }: { label: string; pressed?: boolean; children: ReactNode }) {
  return (
    <button
      aria-label={label}
      className={`flex h-[22px] w-8 items-center justify-center border ${
        pressed
          ? "border-t-[#404040] border-r-white border-b-white border-l-[#404040] bg-[#f3f2ef]"
          : "border-t-white border-r-[#404040] border-b-[#404040] border-l-white"
      }`}
    >
      {children}
    </button>
  );
}

function Taskbar() {
  return (
    <footer className="relative flex h-7 shrink-0 items-center border-t border-white bg-[#d4d0c8] px-[2px] text-black">
      <button className="flex h-[22px] w-[52px] items-center gap-px border border-t-white border-r-[#404040] border-b-[#404040] border-l-white pl-px text-[12px] font-bold">
        <svg width="16" height="16" viewBox="0 0 16 16" className="shrink-0">
          <path d="M3 3c2-1.500 3-1 5 0L6.700 7.500c-2-1-3-1-5 0z" fill="#e9602b" />
          <path d="M9 3.300c2 1 4 1 6 0L13.500 8c-2 1-4 .8-5.800 0z" fill="#7cb83a" />
          <path d="M1.400 8.500c2-1.200 3.200-1 5 0L5 13c-2-1-3-1-5 0z" fill="#3a86d8" />
          <path d="M7.400 9c2 1 4 1 5.800 0l-1.400 4.700c-2 1-4 .8-5.700 0z" fill="#f7c32d" />
        </svg>
        Start
      </button>
      <div className="ml-[17px] flex items-center gap-[17px]">
        <button aria-label="Internet Explorer">
          <svg width="17" height="17" viewBox="0 0 17 17" fill="none">
            <path d="M13.500 11.500a5 5 0 1 1 .5-2.500H5" stroke="#3aa0e0" strokeWidth="2.600" />
            <path d="M2 15C-1 12 8 1.500 15 2c1.500.3 1 2.500 0 3.500" stroke="#e8bb3a" strokeWidth="1.200" />
          </svg>
        </button>
        <button aria-label="Explorer">
          <svg width="17" height="16" viewBox="0 0 17 16">
            <path d="M1 2h6l1 2h7v10H1z" fill="#e7c766" />
            <path d="M2 5h13v9H2z" fill="#f7e6a3" />
            <path d="M4 16v-5h9v5h-2v-3H6v3z" fill="#58b1e6" />
          </svg>
        </button>
        <button aria-label="Media Player">
          <svg width="16" height="16" viewBox="0 0 16 16">
            <rect x=".5" y=".5" width="15" height="15" fill="#a9d0f0" stroke="#5b8ab5" />
            <circle cx="8" cy="8" r="6" fill="#f08a1d" />
            <path d="M6 4.500v7L11.500 8z" fill="#fff" />
          </svg>
        </button>
        <button aria-label="Chrome">
          <svg width="17" height="17" viewBox="1 0 48 48">
            <circle cx="25" cy="24" r="24" fill="#2aa34c" />
            <path d="M4 12C13-4 37-4 46 12l-21 3-8 13z" fill="#e8382c" />
            <path d="M46 12c7 16-3 35-20 36l9-19-6-16z" fill="#fbc816" />
            <circle cx="25" cy="24" r="12" fill="#fff" />
            <circle cx="25" cy="24" r="9" fill="#2f7be6" />
          </svg>
        </button>
        <button aria-label="Edge">
          <svg width="16" height="16" viewBox="0 0 16 16">
            <circle cx="8" cy="8" r="8" fill="#1679cf" />
            <path d="M1 6C3-1 14-2 16 7c0 4-5 4-6 2 1-3-4-6-9-3z" fill="#44c98b" />
            <path d="M5 9c0 5 6 6 10 3-2 5-12 5-13-2 0-2 1-4 4-4z" fill="#0c51a0" />
          </svg>
        </button>
      </div>
      <div className="ml-[11px] flex gap-[2px]">
        <TaskButton label="Excel" pressed><ExcelIcon /></TaskButton>
        <TaskButton label="Command Prompt">
          <svg width="16" height="12" viewBox="0 0 16 12">
            <rect width="16" height="12" fill="#000" />
            <path d="M0 0h16v2H0z" fill="#b9c3cf" />
            <text x="1" y="9.500" fontSize="7" fontWeight="bold" fontFamily="Liberation Mono, monospace" fill="#fff">C:\</text>
          </svg>
        </TaskButton>
        <TaskButton label="Application">
          <svg width="15" height="13" viewBox="0 0 15 13">
            <rect x=".5" y=".5" width="14" height="12" fill="#f5f8fb" stroke="#8ca0b5" />
            <rect x="2" y="3" width="7" height="7" fill="#3f8f92" />
            <path d="M11 4h2M11 6h2" stroke="#567" />
          </svg>
        </TaskButton>
      </div>
      <div className="ml-auto flex h-[22px] items-center border border-t-[#808080] border-r-white border-b-white border-l-[#808080] pr-px pl-[6px]">
        <svg width="17" height="16" viewBox="0 0 17 16" fill="#fff" stroke="#6b6b6b"><path d="M1.500 1v14M3 2.500c3-1.500 4 1 6 1v1.500c2 .5 4 0 6 0l-2 5c-3 1-5-1.500-10 0z" /></svg>
        <svg width="17" height="16" viewBox="0 0 17 16" fill="#eee" stroke="#555" className="ml-[7px]"><path d="M5.500 4.500h10v8h-10zM8 14.500h6M1.500 1.500h4v4h-4zM2.500 0v2M4.500 0v2M3.500 6v9h5" /></svg>
        <svg width="17" height="16" viewBox="0 0 17 16" fill="none" stroke="#666" className="ml-[7px]"><path d="M1.500 5.500h3l4-4v13l-4-4h-3z" fill="#fff" /><path d="M10.500 5.500q1.500 2.500 0 5M12.500 3.500q3 4.500 0 9M14.500 2q3.500 6 0 12" /></svg>
        <time className="ml-4">8:27 AM</time>
        <svg width="16" height="14" viewBox="0 0 16 14" className="ml-[9px]"><rect x=".5" y="1.500" width="15" height="9" fill="#1f62c8" stroke="#123d80" /><path d="M1 2h14L1 8z" fill="#5a9cee" /><path d="M3 12.500h10" stroke="#9aa" /></svg>
      </div>
    </footer>
  );
}

function Watermark() {
  return (
    <div className="pointer-events-none absolute right-[49px] bottom-[20px] flex items-center gap-[6px] font-['DejaVu_Sans_Condensed','DejaVu_Sans',sans-serif] text-[33px] leading-none text-white/60 [text-shadow:0_0_3px_rgba(90,90,90,.45)]">
      <span>ANY</span>
      <svg width="58" height="64" viewBox="0 0 58 64" fill="none" className="drop-shadow-[0_0_2px_rgba(90,90,90,.4)]" stroke="#fff" strokeOpacity=".75" strokeWidth="4" strokeLinejoin="round">
        <path d="M3 14v36M10 54V10l6-6 39 28-39 28-6-6" />
        <path d="M18 16v32l23-16z" />
        <path d="M10 54l40-26" strokeWidth="2" />
      </svg>
      <span>RUN</span>
    </div>
  );
}

export default function App() {
  return (
    <div className="flex h-screen flex-col overflow-hidden font-['Noto_Sans',sans-serif] text-[11px]">
      <main className="relative min-h-0 flex-1 overflow-hidden">
        <Wallpaper />
        <div className="relative grid auto-rows-[98px] grid-cols-[72px_78px] font-['DejaVu_Sans_Condensed','DejaVu_Sans',sans-serif]">
          <DesktopIcon label="Recycle Bin"><RecycleArt /></DesktopIcon>
          <DesktopIcon className="col-start-2"><SkypeArt /></DesktopIcon>
          <DesktopIcon label="Acrobat Reader DC"><AcrobatArt /></DesktopIcon>
          <DesktopIcon label="CCleaner"><CCleanerArt /></DesktopIcon>
          <DesktopIcon label="FileZilla Client"><FileZillaArt /></DesktopIcon>
          <DesktopIcon label="Firefox"><FirefoxArt /></DesktopIcon>
          <DesktopIcon label="Google Chrome"><ChromeArt /></DesktopIcon>
          <DesktopIcon label="browserchi...">
            <rect x="1" y="20" width="45" height="24" fill="#000" />
            <path d="M4 38h13" stroke="#333" />
          </DesktopIcon>
          <DesktopIcon label="storemodel..." className="col-start-2">
            <path d="M1 44.500h44.500V20" fill="none" stroke="#1f6f9f" />
          </DesktopIcon>
        </div>
        <ClassicWindow />
        <ExcelWindow />
        <div className="absolute right-[6px] bottom-0 text-right font-['DejaVu_Sans_Condensed','DejaVu_Sans',sans-serif] leading-[14px] text-white">
          <p className="font-bold">Test Mode</p>
          <p className="font-bold">Windows 7</p>
          <p className="mt-px">Build 7601</p>
        </div>
        <Watermark />
      </main>
      <Taskbar />
    </div>
  );
}
